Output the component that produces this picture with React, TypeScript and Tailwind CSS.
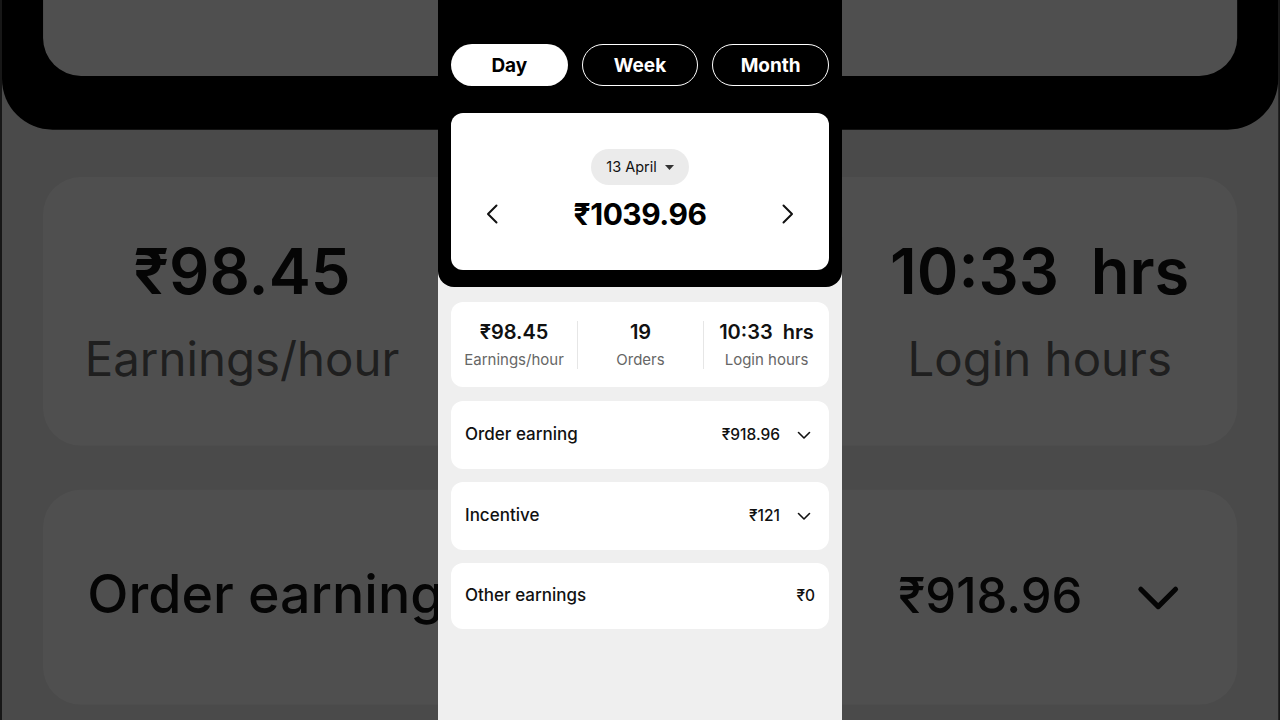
import React from "react";

function ChevronDownSmall() {
  return (
    <svg width="14" height="9" viewBox="0 0 14 9" fill="none">
      <path d="M1.5 1.5 L7 7 L12.5 1.5" stroke="#111" strokeWidth="1.6" strokeLinecap="round" strokeLinejoin="round" />
    </svg>
  );
}

function Screen() {
  return (
    <div className="w-[404px] h-[720px] bg-[#efefef] flex flex-col" style={{ fontFamily: "Inter, 'Noto Sans', sans-serif" }}>
      <div className="bg-black rounded-b-[16px] px-[13px] pt-[44px] pb-[17px]">
        <div className="grid grid-cols-3 gap-[14px]">
          <div className="h-[42px] pt-[2px] rounded-full bg-white text-black flex items-center justify-center text-[19px] font-bold">Day</div>
          <div className="h-[42px] pt-[2px] rounded-full border border-white text-white flex items-center justify-center text-[19px] font-bold">Week</div>
          <div className="h-[42px] pt-[2px] rounded-full border border-white text-white flex items-center justify-center text-[19px] font-bold">Month</div>
        </div>
        <div className="mt-[27px] h-[157px] bg-white rounded-[12px] flex flex-col items-center pt-[36px]">
          <div className="h-[36px] px-[15px] rounded-full bg-[#ebebeb] flex items-center gap-[8px] text-[14.5px] text-[#111]">
            <span>13 April</span>
            <svg width="9" height="5" viewBox="0 0 9 5"><path d="M0 0 L9 0 L4.5 5 Z" fill="#333" /></svg>
          </div>
          <div className="mt-[11px] w-full px-[35px] flex items-center justify-between">
            <svg width="12" height="20" viewBox="0 0 12 20" fill="none">
              <path d="M10.5 1.5 L2 10 L10.5 18.5" stroke="#111" strokeWidth="2" strokeLinecap="round" strokeLinejoin="round" />
            </svg>
            <div className="text-[30px] leading-[36px] font-bold text-black tracking-[-0.5px]">₹1039.96</div>
            <svg width="12" height="20" viewBox="0 0 12 20" fill="none">
              <path d="M1.5 1.5 L10 10 L1.5 18.5" stroke="#111" strokeWidth="2" strokeLinecap="round" strokeLinejoin="round" />
            </svg>
          </div>
        </div>
      </div>

      <div className="px-[13px] flex flex-col">
        <div className="mt-[15px] h-[85px] bg-white rounded-[12px] grid grid-cols-3 items-center">
          <div className="h-[48px] flex flex-col items-center justify-center">
            <div className="text-[20px] leading-[24px] font-semibold text-[#111]">₹98.45</div>
            <div className="mt-[7px] text-[15px] leading-[18px] text-[#666]">Earnings/hour</div>
          </div>
          <div className="h-[48px] border-l border-[#e6e6e6] flex flex-col items-center justify-center">
            <div className="text-[20px] leading-[24px] font-semibold text-[#111]">19</div>
            <div className="mt-[7px] text-[15px] leading-[18px] text-[#666]">Orders</div>
          </div>
          <div className="h-[48px] border-l border-[#e6e6e6] flex flex-col items-center justify-center">
            <div className="text-[20px] leading-[24px] font-semibold text-[#111] whitespace-pre">10:33  hrs</div>
            <div className="mt-[7px] text-[15px] leading-[18px] text-[#666]">Login hours</div>
          </div>
        </div>

        <div className="mt-[14px] h-[68px] bg-white rounded-[12px] flex items-center pl-[14px] pr-[18px]">
          <div className="flex-1 text-[17px] font-medium text-[#111]">Order earning</div>
          <div className="text-[15.5px] font-medium text-[#111]">₹918.96</div>
          <div className="ml-[17px]"><ChevronDownSmall /></div>
        </div>
        <div className="mt-[13px] h-[68px] bg-white rounded-[12px] flex items-center pl-[14px] pr-[18px]">
          <div className="flex-1 text-[17px] font-medium text-[#111]">Incentive</div>
          <div className="text-[15.5px] font-medium text-[#111]">₹121</div>
          <div className="ml-[17px]"><ChevronDownSmall /></div>
        </div>
        <div className="mt-[13px] h-[66px] bg-white rounded-[12px] flex items-center pl-[14px] pr-[14px]">
          <div className="flex-1 text-[17px] font-medium text-[#111]">Other earnings</div>
          <div className="text-[15.5px] font-medium text-[#111]">₹0</div>
        </div>
      </div>
    </div>
  );
}

export default function App() {
  return (
    <div className="relative w-[1280px] h-[720px] overflow-hidden bg-[#4a4a4a]">
      <div aria-hidden="true" className="absolute left-[2px] top-[-777px] origin-top-left scale-[3.159]">
        <Screen />
      </div>
      <div className="absolute inset-0 bg-black/[0.69]" />
      <div className="relative flex justify-center">
        <Screen />
      </div>
    </div>
  );
}
